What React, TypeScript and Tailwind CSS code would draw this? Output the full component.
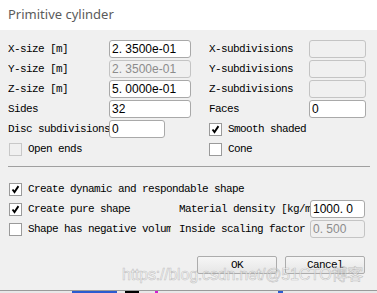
const mono = "font-['Liberation_Mono','DejaVu_Sans_Mono',monospace] text-[11px] tracking-[-0.6px] text-black";

const Field = ({ value, disabled, w }: { value?: string; disabled?: boolean; w: string }) => (
  <div
    className={`${w} h-[18px] rounded-[3px] border px-[2px] flex items-center overflow-hidden whitespace-nowrap font-['Liberation_Sans',Arial,sans-serif] text-[12px] ${
      disabled ? 'bg-[#f0f0f0] border-[#c4c4c4] text-[#8c8c8c]' : 'bg-white border-[#a9a9a9] text-black'
    }`}
  >
    {value}
  </div>
);

const Box = ({ checked, disabled }: { checked?: boolean; disabled?: boolean }) => (
  <div
    className={`w-[13px] h-[13px] shrink-0 border flex items-center justify-center ${
      disabled ? 'bg-[#f0f0f0] border-[#c8c8c8]' : 'bg-white border-[#9a9a9a]'
    }`}
  >
    {checked && (
      <svg viewBox="0 0 13 13" className="w-[11px] h-[11px]">
        <path d="M3 6.5 L5.3 9.5 L10 2.5" fill="none" stroke="#000" strokeWidth="2.2" strokeLinejoin="miter" />
      </svg>
    )}
  </div>
);

const Label = ({ text, w, gray }: { text: string; w: string; gray?: boolean }) => (
  <div className={`${w} shrink-0 overflow-hidden whitespace-nowrap ${mono} ${gray ? 'text-[#8d8d8d]' : ''}`}>{text}</div>
);

export default function App() {
  return (
    <div className="w-[377px] h-[293px] bg-[#f0f0f0] flex flex-col relative overflow-hidden">
      <div className="h-[30px] bg-white flex items-center px-[8px] font-['Noto_Sans','Liberation_Sans',sans-serif] text-[13px] text-[#5b5b5b]">
        Primitive cylinder
      </div>

      <div className="flex flex-col pt-[9px] px-[8px]">
        {[
          ['X-size [m]', '2. 3500e-01', false, 'X-subdivisions'],
          ['Y-size [m]', '2. 3500e-01', true, 'Y-subdivisions'],
          ['Z-size [m]', '5. 0000e-01', false, 'Z-subdivisions'],
        ].map(([l, v, d, r]) => (
          <div key={l as string} className="h-[20px] flex items-center">
            <Label text={l as string} w="w-[101px]" />
            <Field value={v as string} disabled={d as boolean} w="w-[82px]" />
            <div className="w-[18px]" />
            <Label text={r as string} w="w-[100px]" />
            <Field disabled w="w-[57px]" />
          </div>
        ))}

        <div className="h-[20px] flex items-center">
          <Label text="Sides" w="w-[101px]" />
          <Field value="32" w="w-[82px]" />
          <div className="w-[18px]" />
          <Label text="Faces" w="w-[100px]" />
          <Field value="0" w="w-[57px]" />
        </div>

        <div className="h-[20px] flex items-center">
          <Label text="Disc subdivisions" w="w-[101px]" />
          <Field value="0" w="w-[56px]" />
          <div className="w-[44px]" />
          <Box checked />
          <div className="w-[6px]" />
          <Label text="Smooth shaded" w="w-[120px]" />
        </div>

        <div className="h-[20px] flex items-center">
          <div className="w-[1px]" />
          <Box disabled />
          <div className="w-[6px]" />
          <Label text="Open ends" w="w-[181px]" gray />
          <Box />
          <div className="w-[6px]" />
          <Label text="Cone" w="w-[60px]" />
        </div>

        <div className="mt-[7px] h-[1px] w-[362px] bg-[#a0a0a0]" />

        <div className="mt-[12px] h-[20px] flex items-center">
          <div className="w-[1px]" />
          <Box checked />
          <div className="w-[6px]" />
          <Label text="Create dynamic and respondable shape" w="w-[300px]" />
        </div>

        <div className="h-[20px] flex items-center">
          <div className="w-[1px]" />
          <Box checked />
          <div className="w-[6px]" />
          <Label text="Create pure shape" w="w-[143px]" />
          <div className="w-[8px]" />
          <Label text="Material density [kg/m^3]" w="w-[131px]" />
          <Field value="1000. 0" w="w-[55px]" />
        </div>

        <div className="h-[20px] flex items-center">
          <div className="w-[1px]" />
          <Box />
          <div className="w-[6px]" />
          <Label text="Shape has negative volume" w="w-[143px]" />
          <div className="w-[8px]" />
          <Label text="Inside scaling factor" w="w-[131px]" />
          <Field value="0. 500" disabled w="w-[55px]" />
        </div>

        <div className="mt-[17px] flex justify-end gap-[8px] pr-[4px]">
          {['OK', 'Cancel'].map((t) => (
            <button
              key={t}
              className={`w-[80px] h-[18px] rounded-[2px] border border-[#acacac] bg-gradient-to-b from-[#f6f6f6] to-[#e6e6e6] flex items-center justify-center ${mono}`}
            >
              {t}
            </button>
          ))}
        </div>
      </div>

      <div className="mt-auto h-[3px] border-t border-[#9a9a9a] bg-[#e8e8e8] flex">
        <div className="w-[72px]" />
        <div className="w-[45px] bg-[#2a5bd0]" />
        <div className="w-[8px]" />
        <div className="w-[14px] bg-black" />
        <div className="w-[16px]" />
        <div className="w-[3px] bg-[#d020d0]" />
        <div className="w-[120px]" />
        <div className="w-[5px] bg-[#2a5bd0]" />
      </div>

      <div className="absolute left-[122px] top-[263px] whitespace-nowrap font-['Liberation_Sans','Noto_Sans_CJK_SC',sans-serif] text-[16px] tracking-[-0.2px] text-white/60 [-webkit-text-stroke:0.6px_rgba(150,150,150,0.55)] pointer-events-none">
        https://blog.csdn.net/@51CTO博客
      </div>
    </div>
  );
}
